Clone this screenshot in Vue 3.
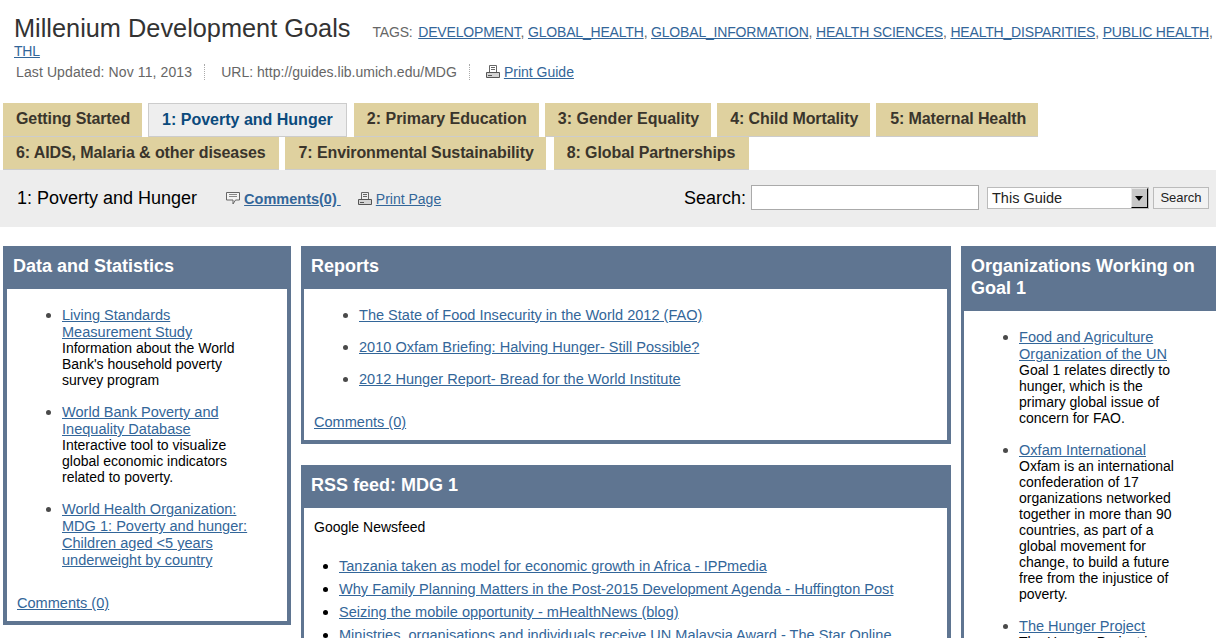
<script setup>
const tags = ['DEVELOPMENT','GLOBAL_HEALTH','GLOBAL_INFORMATION','HEALTH SCIENCES','HEALTH_DISPARITIES','PUBLIC HEALTH','THL']
const tabs = ['Getting Started','1: Poverty and Hunger','2: Primary Education','3: Gender Equality','4: Child Mortality','5: Maternal Health','6: AIDS, Malaria & other diseases','7: Environmental Sustainability','8: Global Partnerships']
const data = [
  { link: 'Living Standards Measurement Study', text: "Information about the World Bank's household poverty survey program" },
  { link: 'World Bank Poverty and Inequality Database', text: 'Interactive tool to visualize global economic indicators related to poverty.' },
  { link: 'World Health Organization: MDG 1: Poverty and hunger: Children aged <5 years underweight by country', text: '' }
]
const reports = ['The State of Food Insecurity in the World 2012 (FAO)','2010 Oxfam Briefing: Halving Hunger- Still Possible?','2012 Hunger Report- Bread for the World Institute']
const feed = ['Tanzania taken as model for economic growth in Africa - IPPmedia','Why Family Planning Matters in the Post-2015 Development Agenda - Huffington Post','Seizing the mobile opportunity - mHealthNews (blog)','Ministries, organisations and individuals receive UN Malaysia Award - The Star Online']
const orgs = [
  { link: 'Food and Agriculture Organization of the UN', text: 'Goal 1 relates directly to hunger, which is the primary global issue of concern for FAO.' },
  { link: 'Oxfam International', text: 'Oxfam is an international confederation of 17 organizations networked together in more than 90 countries, as part of a global movement for change, to build a future free from the injustice of poverty.' },
  { link: 'The Hunger Project', text: 'The Hunger Project is a global organization.' }
]
</script>

<template>
  <div class="page">
    <header class="top">
      <div class="title-line">
        <h1>Millenium Development Goals</h1>
        <span class="tags"><span class="tags-label">TAGS:</span> <template v-for="(t, i) in tags" :key="t"><a href="#">{{ t }}</a><template v-if="i < tags.length - 1">, </template></template></span>
      </div>
      <div class="meta">
        <span class="meta-item first">Last Updated: Nov 11, 2013</span>
        <span class="meta-item url">URL: http://guides.lib.umich.edu/MDG</span>
        <span class="meta-item last">
          <svg class="ico" viewBox="0 0 14 14" width="14" height="14"><path d="M3.500 7V.5h7V7M5 2.500h4M5 4.500h4" fill="none" stroke="#666"/><path d="M.5 7.500h13v5H.5z" fill="#d4d4d4" stroke="#555"/><path d="M2 10.500h4" stroke="#555"/></svg>
          <a href="#">Print Guide</a>
        </span>
      </div>
    </header>

    <nav class="tabs">
      <a v-for="(t, i) in tabs" :key="t" href="#" class="tab" :class="{ active: i === 1 }">{{ t }}</a>
    </nav>

    <div class="bar">
      <span class="bar-title">1: Poverty and Hunger</span>
      <svg class="ico bubble" viewBox="0 0 15 15" width="15" height="15"><path d="M.5 1.500h13v7.500h-4l-2.500 4v-4H.5z" fill="#f4f4f4" stroke="#666"/><path d="M3 3.500h8M3 5.500h8" stroke="#888"/></svg>
      <a href="#" class="comments">Comments(0)&nbsp;</a>
      <svg class="ico print" viewBox="0 0 14 14" width="14" height="14"><path d="M3.500 7V.5h7V7M5 2.500h4M5 4.500h4" fill="none" stroke="#666"/><path d="M.5 7.500h13v5H.5z" fill="#d4d4d4" stroke="#555"/><path d="M2 10.500h4" stroke="#555"/></svg>
      <a href="#" class="printpage">Print Page</a>
      <div class="search">
        <label for="q">Search:</label>
        <input id="q" class="q" type="text" />
        <div class="sel"><span>This Guide</span><i class="arrow"></i></div>
        <button class="go" type="button">Search</button>
      </div>
    </div>

    <main class="cols">
      <section class="col left">
        <div class="panel">
          <h2>Data and Statistics</h2>
          <div class="body">
            <ul class="list">
              <li v-for="d in data" :key="d.link"><a href="#">{{ d.link }}</a>{{ d.text }}</li>
            </ul>
            <a href="#" class="cm">Comments (0)</a>
          </div>
        </div>
      </section>

      <section class="col mid">
        <div class="panel thin">
          <h2>Reports</h2>
          <div class="body">
            <ul class="list">
              <li v-for="r in reports" :key="r"><a href="#">{{ r }}</a></li>
            </ul>
            <a href="#" class="cm">Comments (0)</a>
          </div>
        </div>
        <div class="panel thin rss">
          <h2>RSS feed: MDG 1</h2>
          <div class="body">
            <p class="feedname">Google Newsfeed</p>
            <ul class="feed">
              <li v-for="f in feed" :key="f"><a href="#">{{ f }}</a></li>
            </ul>
          </div>
        </div>
      </section>

      <section class="col right">
        <div class="panel thin">
          <h2>Organizations Working on Goal 1</h2>
          <div class="body">
            <ul class="list">
              <li v-for="o in orgs" :key="o.link"><a href="#">{{ o.link }}</a>{{ o.text }}</li>
            </ul>
          </div>
        </div>
      </section>
    </main>
  </div>
</template>

<style>
html, body { margin: 0; height: 638px; overflow: hidden; background: #fff; }
</style>

<style scoped>
.page { width: 1216px; height: 638px; overflow: hidden; font-family: "Liberation Sans", Arial, sans-serif; font-size: 14px; color: #000; }
a { color: #336699; text-decoration: underline; }
.top { padding: 21px 0 0 14px; }
.title-line { line-height: 19px; width: 1202px; }
h1 { display: inline; font-size: 25.33px; font-weight: 400; color: #333; margin: 0 22px 0 0; line-height: 14px; }
.tags { color: #666; font-size: 14px; letter-spacing: -0.18px; }
.tags-label { margin-right: 2px; }
.meta { display: flex; align-items: center; height: 16px; margin: 3px 0 0 2px; color: #666; }
.meta-item { display: flex; align-items: center; height: 16px; padding: 0 12px 0 16px; border-left: 1px dotted #aaa; }
.meta-item.first { padding-left: 0; border-left: 0; padding-right: 12px; letter-spacing: 0.11px; }
.meta-item.url { letter-spacing: 0.02px; }
.ico { flex: none; margin-right: 4px; }
.tabs { display: flex; flex-wrap: wrap; margin-top: 23px; padding-left: 3px; column-gap: 6px; }
.tab { box-sizing: border-box; height: 34px; line-height: 31px; padding: 0 12px 0 13px; background: #dfd19f; border-bottom: 1px solid #ccc; color: #3a352c; font-size: 16px; font-weight: 700; letter-spacing: -0.1px; text-decoration: none; white-space: nowrap; }
.tab.active { background: #eeeeee; border: 1px solid #ccc; color: #0b4a7c; line-height: 31px; padding: 0 13px; letter-spacing: 0; margin-right: 1px; }
.tab:nth-child(3), .tab:nth-child(4) { letter-spacing: 0; }
.tab:nth-child(6) { padding-left: 14px; }
.tab:nth-child(n+7) { height: 33px; line-height: 31px; }
.tab:nth-child(7) { padding-right: 13px; }
.tab:nth-child(8) { padding: 0 12px 0 14px; margin-right: 2px; }
.tab:nth-child(9) { padding: 0 14px 0 13px; }
.bar { display: flex; align-items: center; box-sizing: border-box; height: 57px; background: #ededed; padding: 0 7px 0 17px; }
.bar-title { font-size: 18px; margin-right: 29px; }
.comments { font-weight: 700; font-size: 14.5px; margin-right: 17px; }
.bubble { margin-right: 3px; }
.search { display: flex; align-items: center; margin-left: auto; margin-bottom: 2px; }
.search label { font-size: 18px; margin-right: 5px; padding-top: 2px; }
.q { box-sizing: border-box; width: 228px; height: 25px; border: 1px solid #aaa; background: #fff; padding: 0; margin: 0 8px 0 0; }
.sel { box-sizing: border-box; display: flex; align-items: center; justify-content: space-between; width: 162px; height: 22px; border: 1px solid #bbb; background: #fff; margin-right: 4px; font-size: 14.5px; padding-left: 4px; color: #222; }
.arrow { position: relative; box-sizing: border-box; width: 17px; height: 20px; background: #c8c8c8; border: 1px solid; border-color: #e8e8e8 #000 #000 #e8e8e8; }
.arrow::after { content: ""; position: absolute; left: 3px; top: 7px; border: 4px solid transparent; border-top: 5px solid #000; border-bottom: 0; }
.go { box-sizing: border-box; width: 56px; height: 22px; padding: 0; border: 1px solid #bbb; background: #f2f2f2; font: 13px "Liberation Sans", Arial, sans-serif; color: #222; }
.cols { display: flex; align-items: flex-start; padding: 19px 0 0 3px; column-gap: 10px; }
.col { flex: none; }
.left { width: 288px; }
.mid { width: 650px; }
.right { width: 270px; }
.panel { background: #5f7591; padding: 0 4px 4px; }
.panel.thin { padding-left: 3px; }
.panel h2 { margin: 0; padding: 9px 6px 12px; font-size: 18px; line-height: 22px; font-weight: 700; color: #fff; }
.thin h2 { padding-left: 7px; }
.body { background: #fff; padding: 18px 10px 9px; }
.list { margin: 0; padding: 0 26px 0 45px; line-height: 16px; list-style: none; }
.list li, .feed li { position: relative; }
.list li { margin-bottom: 16px; }
.list li::before, .feed li::before { content: ""; position: absolute; left: -16px; top: 6px; width: 5px; height: 5px; border-radius: 50%; background: #4a4a4a; }
.list a, .feed a { display: block; line-height: 17px; margin-bottom: -1px; font-size: 14.55px; }
.right .list { padding-right: 37px; }
.cm { display: block; line-height: 17px; margin-top: 27px; font-size: 14.55px; }
.rss { margin-top: 21px; }
.feedname { margin: 0; line-height: 16px; padding-top: 2px; }
.feed { margin: 23px 0 0; padding: 0 0 0 25px; list-style: none; }
.rss .body { padding-top: 9px; }
.feed li { margin-bottom: 7px; }
.feed li::before { background: #000; }
</style>
